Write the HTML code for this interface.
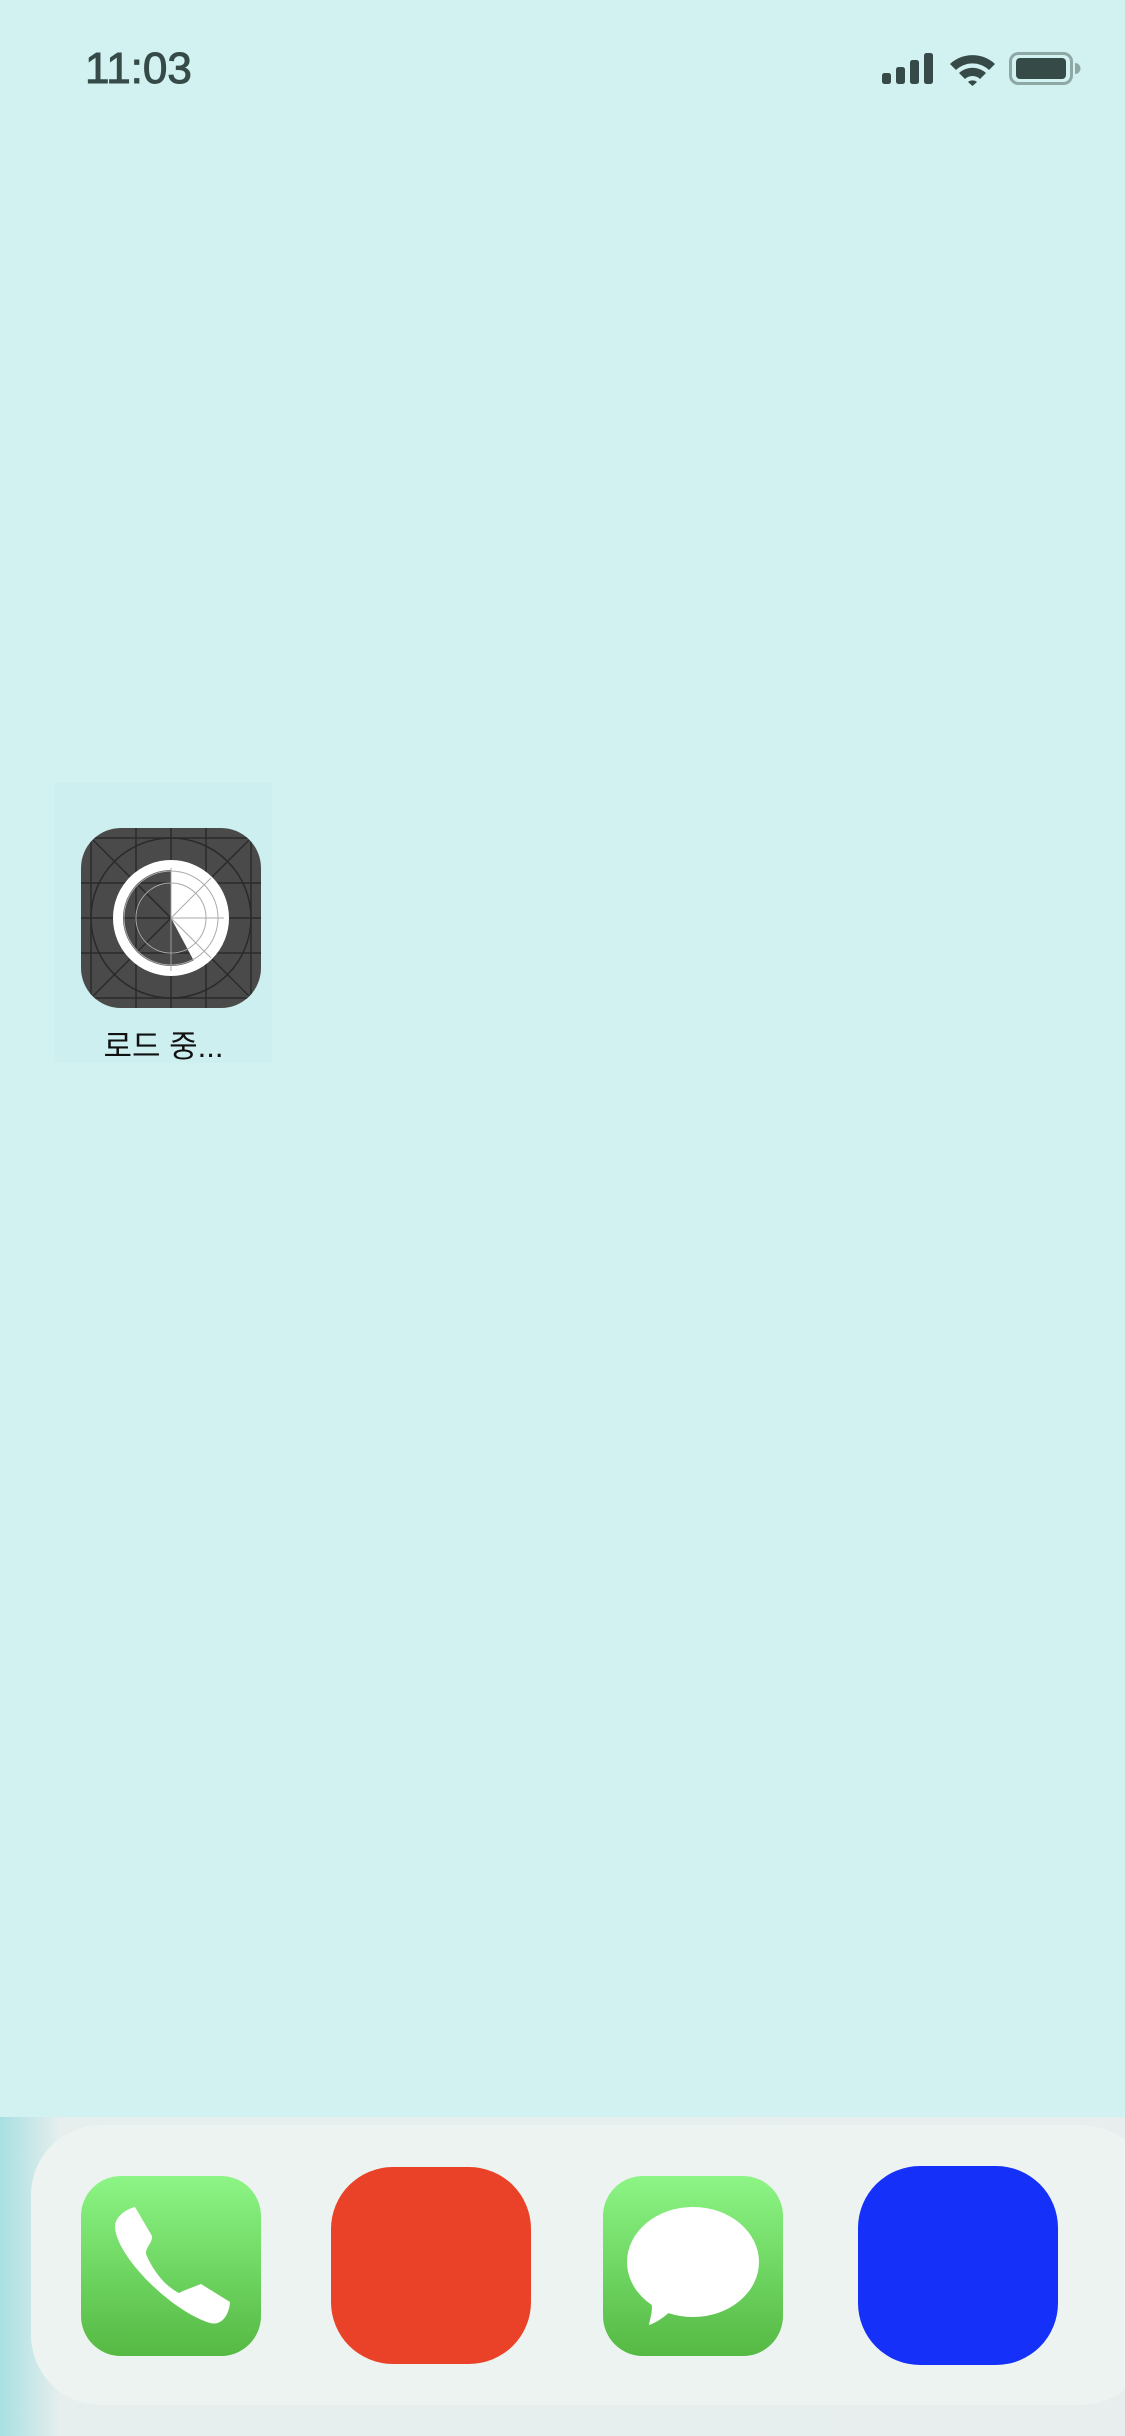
<!DOCTYPE html>
<html><head><meta charset="utf-8"><style>
html,body{margin:0;padding:0}
body{width:1125px;height:2436px;position:relative;overflow:hidden;background:#d2f2f2;font-family:"Liberation Sans","Noto Sans CJK KR",sans-serif}
.abs{position:absolute}
</style></head><body>
<div class="abs" style="left:85px;top:44px;font-size:44px;color:#364b48;-webkit-text-stroke:1px #364b48">11:03</div>
<svg class="abs" style="left:860px;top:40px" width="230" height="60" viewBox="860 40 230 60">
<rect x="882" y="73" width="9" height="11" rx="2.5" fill="#364b48"/>
<rect x="896" y="67" width="9" height="17" rx="2.5" fill="#364b48"/>
<rect x="910" y="60" width="9" height="24" rx="2.5" fill="#364b48"/>
<rect x="924" y="53" width="9" height="31" rx="2.5" fill="#364b48"/>
<path d="M950 64 A33 33 0 0 1 995 64 L989 70 A24 24 0 0 0 956 70 Z" fill="#364b48"/>
<path d="M959 73 A20 20 0 0 1 986 73 L980 79 A11 11 0 0 0 965 79 Z" fill="#364b48"/>
<path d="M968 82 A7 7 0 0 1 977 82 L972.5 86 Z" fill="#364b48"/>
<rect x="1010.5" y="53.5" width="61" height="30" rx="8" fill="none" stroke="#8fa8a6" stroke-width="3"/>
<rect x="1016" y="58" width="50" height="21" rx="4" fill="#364b48"/>
<path d="M1075 63 A5 5 0 0 1 1075 74 Z" fill="#8fa8a6"/>
</svg>
<div class="abs" style="left:55px;top:783px;width:217px;height:280px;background:#cdeff0"></div>
<svg class="abs" style="left:81px;top:828px" width="180" height="180" viewBox="0 0 180 180">
<defs><clipPath id="c"><rect width="180" height="180" rx="40"/></clipPath></defs>
<g clip-path="url(#c)">
<rect width="180" height="180" fill="#4a4a4a"/>
<g stroke="#2a2a2a" stroke-width="1.5" fill="none">
<line x1="10" y1="0" x2="10" y2="180"/><line x1="55" y1="0" x2="55" y2="180"/><line x1="90" y1="0" x2="90" y2="180"/><line x1="125" y1="0" x2="125" y2="180"/><line x1="170" y1="0" x2="170" y2="180"/>
<line y1="10" x1="0" y2="10" x2="180"/><line y1="55" x1="0" y2="55" x2="180"/><line y1="90" x1="0" y2="90" x2="180"/><line y1="125" x1="0" y2="125" x2="180"/><line y1="170" x1="0" y2="170" x2="180"/>
<line x1="0" y1="0" x2="180" y2="180"/><line x1="180" y1="0" x2="0" y2="180"/>
<circle cx="90" cy="90" r="80"/><circle cx="90" cy="90" r="35"/>
</g>
<circle cx="90" cy="90" r="53" fill="none" stroke="#fff" stroke-width="10"/>
<path d="M90 40 A50 50 0 0 1 114 135 L90 90 Z" fill="#fff"/>
<g stroke="#aaa" stroke-width="1" fill="none"><circle cx="90" cy="90" r="35"/><circle cx="90" cy="90" r="47"/><line x1="90" y1="90" x2="130" y2="50"/><line x1="90" y1="90" x2="130" y2="130"/><line x1="90" y1="90" x2="143" y2="90"/><line x1="90" y1="40" x2="90" y2="143"/></g>
</g></svg>
<div class="abs" style="left:55px;top:1021px;width:217px;text-align:center;font-size:31px;color:#111">로드 중...</div>
<div class="abs" style="left:0;top:2117px;width:1125px;height:319px;background:linear-gradient(90deg,#a8e0e2 0px,#e6eeee 60px,#e8eeee 100%)"></div>
<div class="abs" style="left:31px;top:2125px;width:1120px;height:280px;border-radius:70px;background:#edf3f0"></div>
<svg class="abs" style="left:81px;top:2176px" width="180" height="180" viewBox="0 0 180 180">
<defs><linearGradient id="g" x1="0" y1="0" x2="0" y2="1"><stop offset="0" stop-color="#8cf585"/><stop offset="1" stop-color="#55b943"/></linearGradient></defs>
<rect width="180" height="180" rx="40" fill="url(#g)"/>
<path d="M54 31 L71 60 C72 66 64 72 65 78 C72 95 84 110 98 117 L102 115 L120 108 L149 126 C148 140 140 150 129 147 C90 135 35 80 34 51 C34 40 46 33 54 31 Z" fill="#fff"/>
</svg>
<div class="abs" style="left:331px;top:2167px;width:200px;height:197px;border-radius:62px;background:#ea4228"></div>
<svg class="abs" style="left:603px;top:2176px" width="180" height="180" viewBox="0 0 180 180">
<rect width="180" height="180" rx="40" fill="url(#g)"/>
<ellipse cx="90" cy="86" rx="66" ry="55" fill="#fff"/>
<path d="M45 118 C52 130 48 138 46 149 C55 146 62 140 68 135 Z" fill="#fff"/>
</svg>
<div class="abs" style="left:858px;top:2166px;width:200px;height:199px;border-radius:62px;background:#1530f8"></div>
</body></html>
